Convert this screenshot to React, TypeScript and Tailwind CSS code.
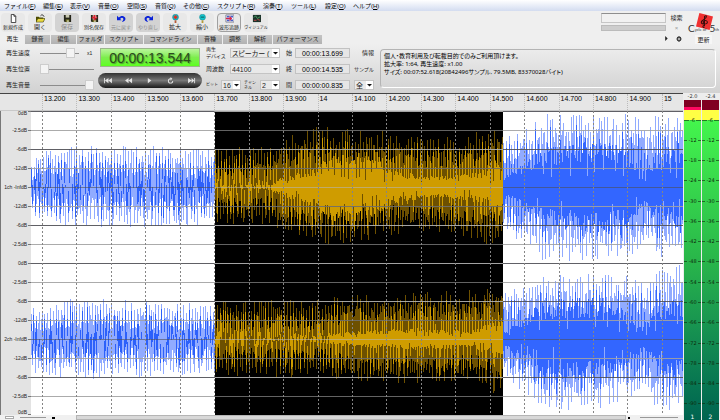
import type { ReactNode } from "react";
import clsx from "clsx";

const menus = [
  ["ファイル", "F", "w-[39px]"],
  ["編集", "E", "w-[27px]"],
  ["表示", "V", "w-[28px]"],
  ["音量", "O", "w-[29px]"],
  ["空間", "S", "w-[28px]"],
  ["音質", "Q", "w-[28px]"],
  ["その他", "C", "w-[34px]"],
  ["スクリプト", "R", "w-[46px]"],
  ["演奏", "T", "w-[28px]"],
  ["ツール", "L", "w-[34px]"],
  ["設定", "O", "w-[28px]"],
  ["ヘルプ", "H", "w-[34px]"],
];

const tabs = [
  ["再生", "w-[24px]"],
  ["録音", "w-[26px]"],
  ["編集", "w-[26px]"],
  ["フォルダ", "w-[28px]"],
  ["スクリプト", "w-[39px]"],
  ["コマンドライン", "w-[54px]"],
  ["音種", "w-[25px]"],
  ["調整", "w-[25px]"],
  ["解析", "w-[25px]"],
  ["パフォーマンス", "w-[50px]"],
];

const times = [
  "13.200", "13.300", "13.400", "13.500", "13.600", "13.700", "13.800",
  "13.900", "14", "14.100", "14.200", "14.300", "14.400", "14.500",
  "14.600", "14.700", "14.800", "14.900", "15",
];

const levels = [
  "0dB", "-2.5dB", "-6dB", "-12dB", "1ch -InfdB", "-12dB", "-6dB", "-2.5dB",
  "0dB", "-2.5dB", "-6dB", "-12dB", "2ch -InfdB", "-12dB", "-6dB", "-2.5dB",
  "0dB",
];

const meterMarks = [
  -6, -12, -18, -24, -30, -36, -42, -48, -54, -60, -66, -72, -78, -84, -90,
];

function Floppy() {
  return (
    <>
      <path d="M1 1h8v8H2L1 8z" fill="#26261a" />
      <path d="M3 1h4v3H3z" fill="#c9c9b0" />
      <path d="M3 6h4v3H3z" fill="#77772a" />
      <path d="M5 7h1v2H5z" fill="#fff" />
    </>
  );
}

const icons: Record<string, ReactNode> = {
  新規作成: <path d="M2.500 .5h3l2 2v7h-5zM5.500 .5v2h2" fill="#fff" stroke="#333" />,
  開く: (
    <>
      <path d="M0 3h3l1 1h4v5H0z" fill="#4b4b00" />
      <path d="M2 5h8L8 9H0z" fill="#e8d840" stroke="#333300" strokeWidth=".6" />
      <path d="M5 2c1-1.500 3-1.500 4 1" fill="none" stroke="#222" />
    </>
  ),
  保存: <Floppy />,
  別名保存: (
    <>
      <Floppy />
      <path d="M4 1h2v2h2v2H6v2H4V5H2V3h2z" fill="#dd2233" />
      <path d="M6 3h1v1H6zM3 5h1v1H3z" fill="#fff" />
    </>
  ),
  元に戻す: (
    <path d="M0 2v5h5L3.500 5.500C5 3.500 7.500 4 7 6.500L5.500 9C9 8.500 10 6 9 4 7.500 1.500 4 1.500 2 4z" fill="#0a22d8" />
  ),
  やり直し: (
    <path d="M10 2v5H5l1.500-1.500C5 3.500 2.500 4 3 6.500L4.500 9C1 8.500 0 6 1 4 2.500 1.500 6 1.500 8 4z" fill="#0a22d8" />
  ),
  拡大: (
    <>
      <circle cx="5" cy="3.500" r="3.300" fill="#16b7c4" stroke="#14808c" strokeWidth=".5" />
      <path d="M3 3.500h4M5 1.500v4" stroke="#e03020" strokeWidth="1.800" />
      <path d="M4 7h2v3H4z" fill="#b55a38" />
    </>
  ),
  縮小: (
    <>
      <circle cx="5" cy="3.500" r="3.300" fill="#16c4cc" stroke="#14808c" strokeWidth=".5" />
      <path d="M3 3.500h4" stroke="#177" strokeWidth="1.500" />
      <path d="M4 7h2v3H4z" fill="#b59a38" />
    </>
  ),
  波形追跡: (
    <>
      <path d="M1 1h9v8H1z" fill="#fff" stroke="#556" strokeWidth=".7" />
      <path d="M2 2h3v2H2zM6 2h3v2H6zM2 6h3v2H2zM6 6h3v2H6z" fill="#4661c8" />
      <path d="M1 5h6" stroke="#d3254d" strokeWidth="1.500" />
      <path d="M5 2l3 3-3 3z" fill="#d3254d" />
    </>
  ),
  ヴィジュアル: (
    <>
      <path d="M1 1h9v8H1z" fill="#1d332c" />
      <path d="M2 4l2-2 2 3 3-2" fill="none" stroke="#4da866" />
      <path d="M2 7h3M6 6l3 1" stroke="#c84848" />
    </>
  ),
};

const tools = Object.keys(icons);

// [x, peak above, peak below, solid core]
type Shape = [number, number, number, number];

const channels: { mid: number; seed: number; shape: Shape[] }[] = [
  {
    mid: 76,
    seed: 11,
    shape: [
      [0, 24, 30, 0], [10, 38, 36, 0], [60, 42, 41, 0], [184, 40, 39, 0],
      [186, 38, 38, 0], [235, 42, 40, 2], [255, 52, 46, 8], [284, 60, 56, 15],
      [305, 60, 58, 25], [335, 58, 53, 23], [365, 54, 47, 12],
      [400, 50, 45, 8], [430, 51, 49, 9], [455, 58, 58, 14],
      [471, 62, 62, 22], [473, 52, 44, 8], [490, 60, 60, 16],
      [515, 74, 76, 29], [570, 76, 76, 34], [595, 74, 70, 28],
      [615, 68, 62, 17], [630, 74, 70, 24], [652, 76, 76, 34],
    ],
  },
  {
    mid: 228,
    seed: 47,
    shape: [
      [0, 32, 36, 0], [45, 41, 41, 0], [100, 40, 39, 0], [184, 35, 35, 0],
      [186, 39, 36, 0], [235, 39, 38, 1], [285, 41, 40, 3],
      [325, 44, 42, 6], [380, 46, 46, 8], [440, 50, 40, 6],
      [460, 56, 54, 12], [471, 58, 58, 16], [473, 48, 38, 6],
      [490, 54, 52, 16], [515, 64, 70, 28], [560, 66, 72, 30],
      [595, 64, 60, 20], [612, 56, 50, 10], [622, 70, 66, 20],
      [640, 74, 76, 28], [652, 76, 62, 26],
    ],
  },
];

function shapeAt(shape: Shape[], x: number) {
  const i = Math.max(1, shape.findIndex((s) => s[0] >= x));
  const a = shape[i - 1];
  const b = shape[i];
  const t = (x - a[0]) / (b[0] - a[0]);
  return [1, 2, 3].map((k) => a[k] + (b[k] - a[k]) * t);
}

function trace(channel: (typeof channels)[0], from: number, to: number) {
  const { mid, shape } = channel;
  let s = channel.seed * 7919 + from * 104729 + 1;
  const rnd = () => {
    s = (s * 16807) % 2147483647;
    return s / 2147483647;
  };
  let soft = "";
  let solid = "";
  const bar = (x: number, up: number, down: number) => {
    const height = Math.max(1, Math.round(up + down));
    return `M${x} ${Math.round(mid - up)}v${height}h1v${-height}z`;
  };
  let crest = 0;
  let trough = 1;
  for (let x = from; x < to; x++) {
    const [up, down, core] = shapeAt(shape, x);
    const loud = core > 5 ? 0.15 : 0;
    let a = 0.22 + loud + rnd() * 0.4;
    let b = 0.22 + loud + rnd() * 0.4;
    let solidUp = core * (0.7 + rnd() * 0.7);
    let solidDown = core * (0.7 + rnd() * 0.7);
    if (--crest <= 0) {
      crest = rnd() < 0.7 ? 3 : 2;
      a = 0.68 + rnd() * 0.32;
      if (rnd() < 0.8) solidUp = Math.max(solidUp, up * a * (0.45 + rnd() * 0.45));
      if (core < 4) solidDown = (rnd() - 0.5) * 18;
    } else if (--trough <= 0) {
      trough = rnd() < 0.7 ? 2 : 1;
      b = 0.68 + rnd() * 0.32;
      if (rnd() < 0.8) solidDown = Math.max(solidDown, down * b * (0.45 + rnd() * 0.45));
      if (core < 4) solidUp = (rnd() - 0.5) * 18;
    } else if (core < 4 && rnd() < 0.4) {
      solidUp = rnd() * 16;
      solidDown = rnd() * 16;
    } else if (rnd() < 0.2) {
      solidUp *= 0.4;
    } else if (rnd() < 0.2) {
      solidDown *= 0.4;
    }
    soft += bar(x, Math.max(solidUp, up * a), Math.max(solidDown, down * b));
    if (solidUp + solidDown > 1) solid += bar(x, solidUp, solidDown);
  }
  return { soft, solid };
}

const regions = [
  { from: 0, to: 184, soft: "#91abff", solid: "#2c60fa" },
  { from: 184, to: 472, soft: "#6d5000", solid: "#cf9c00" },
  { from: 472, to: 652, soft: "#91abff", solid: "#3366ff" },
];

function Waveform() {
  return (
    <svg
      viewBox="0 0 652 304"
      preserveAspectRatio="none"
      shapeRendering="crispEdges"
      className="block h-full w-full"
    >
      <path d="M0 0h652v304H0z" fill="#fff" />
      <path d="M184 0h288v304H184z" fill="#000" />
      {regions.map((region) =>
        channels.map((channel) => {
          const t = trace(channel, region.from, region.to);
          return (
            <g key={`${region.from}-${channel.mid}`}>
              <path d={t.soft} fill={region.soft} />
              <path d={t.solid} fill={region.solid} />
            </g>
          );
        })
      )}
      {Array.from({ length: 16 }, (_, i) => {
        const major = i % 2 === 0;
        return (
          <g key={i} opacity={i % 4 === 0 && i % 8 !== 0 ? 0.6 : 0.9}>
            <path d={`M0 ${i * 19}h184v1H0zM472 ${i * 19}h180v1H472z`} fill={major ? "#4f4f55" : "#a2a2a2"} />
            <path d={`M184 ${i * 19}h288v1H184z`} fill={major ? "#b5b5b5" : "#6e6e6e"} />
          </g>
        );
      })}
      {times.map((time, i) => (
        <path
          key={time}
          d={`M${Math.round(11 + i * 34.44) + 0.5} 0v304`}
          stroke="#858585"
          strokeDasharray="2 2"
        />
      ))}
    </svg>
  );
}

function Slider({ label, value, width }: { label: string; value: number; width: string }) {
  return (
    <div className="flex h-4 items-center">
      <label htmlFor={label} className="w-[34px] shrink-0">
        {label}
      </label>
      <input
        id={label}
        type="range"
        defaultValue={value}
        className={clsx(
          "h-[10px] appearance-none bg-transparent [&::-webkit-slider-runnable-track]:h-px [&::-webkit-slider-runnable-track]:bg-[#8c8c8c] [&::-webkit-slider-thumb]:-mt-[5px] [&::-webkit-slider-thumb]:h-[10px] [&::-webkit-slider-thumb]:w-[9px] [&::-webkit-slider-thumb]:appearance-none [&::-webkit-slider-thumb]:border [&::-webkit-slider-thumb]:border-[#cdcdcd] [&::-webkit-slider-thumb]:bg-[#f4f4f4]",
          width
        )}
      />
      {label === "再生速度" && <span className="pl-2 text-[5px]">x1</span>}
    </div>
  );
}

function Select({ label, value, width }: { label: string; value: string; width: string }) {
  return (
    <span className={clsx("relative flex h-[10px] items-center", width)}>
      <select
        aria-label={label}
        className="h-full w-full appearance-none border border-[#c4c4c4] bg-[#e9e9e9] pl-[1px] text-[7px] leading-none [font-feature-settings:'palt']"
      >
        <option>{value}</option>
      </select>
      <svg viewBox="0 0 7 8" className="pointer-events-none absolute right-px h-2 w-[7px]">
        <path d="M0 0h7v8H0z" fill="#fff" />
        <path d="M1 3h5L3.500 5.500z" fill="#111" />
      </svg>
    </span>
  );
}

function TimeField({ label, value }: { label: string; value: string }) {
  return (
    <div className="flex h-4 items-center">
      <label htmlFor={label} className="w-[9px]">
        {label}
      </label>
      <input
        id={label}
        defaultValue={value}
        className="h-[10px] w-[55px] border border-[#c2c2c2] bg-[#e6e6e6] text-center font-['Liberation_Sans'] text-[7px] leading-none text-black"
      />
    </div>
  );
}

const transport = [
  ["先頭へ", "M0 1h1v6H0zM5 1v6L1 4zM9 1v6L5 4z"],
  ["巻き戻し", "M4 1v6L0 4zM8 1v6L4 4z"],
  ["再生", "M2 1v6l4-3z"],
  ["ループ", "M4 0v1.500a3 3 0 1 0 3 3h-1a2 2 0 1 1-2-2V4l2-2z"],
  ["早送り", "M0 1v6l4-3zM4 1v6l3-3zM7 1h1v6H7z"],
];

function Meter({ channel, peak, clipped }: { channel: number; peak: string; clipped?: boolean }) {
  return (
    <div className="flex w-[17px] flex-col font-['DejaVu_Sans'] text-[5px]">
      <div className="h-[7px] text-center leading-[7px] text-[#333]">{peak}</div>
      <div className="flex flex-1 flex-col bg-linear-to-b from-[#48ff4c] via-[#29b64a] to-[#006450]">
        <div className={clsx("h-[10px] bg-[#800022]", clipped && "border-b-[3px] border-[#ff0860]")} />
        <div className="flex flex-1 flex-col bg-[linear-gradient(#ffff45_10px,transparent_10px)]">
          {meterMarks.map((mark) => (
            <div key={mark} className="flex flex-1 items-center gap-px text-[#0d2a0a]">
              <span className="h-px flex-1 bg-current opacity-60" />
              <span className="leading-none">{mark}</span>
              <span className="h-px flex-1 bg-current opacity-60" />
            </div>
          ))}
        </div>
        <div className="h-[6px] text-center text-[6px] leading-[6px] text-white">{channel}</div>
      </div>
    </div>
  );
}

function Logo() {
  return (
    <div className="relative flex h-[20px] w-[31px] items-end font-['Lato'] leading-none text-[#333]">
      <svg viewBox="0 0 20 20" className="absolute left-[8px] top-0 h-[17px] w-[17px]">
        <path d="M4 0l16 4-4 16L0 16z" fill="#f03030" />
        <path
          d="M10 17c-3 0-2-3 0-2V4c3-2 3 1 0 3-5 3-5 6 0 6 5 0 4-5 0-4-2 1-2 3 0 3"
          fill="none"
          stroke="#3a0d0d"
          strokeWidth="1.200"
        />
      </svg>
      <span className="relative text-[10px]">C</span>
      <span className="relative flex-1 pb-px text-[4px]">ycle of</span>
      <span className="relative text-[10px]">5</span>
      <span className="relative pb-px text-[4px]">th</span>
    </div>
  );
}

export default function App() {
  return (
    <div className="flex min-h-screen flex-col overflow-hidden bg-[#efefef] font-['Liberation_Sans','Noto_Sans_CJK_JP',sans-serif] text-[6px] leading-none text-[#222]">
      <nav className="flex h-[11px] items-center bg-linear-to-b from-white to-[#d3dcf0] pl-1 text-black">
        {menus.map(([name, key, width]) => (
          <button key={name} className={clsx("shrink-0 whitespace-nowrap text-left", width)}>
            {name}(<u>{key}</u>)
          </button>
        ))}
      </nav>

      <header className="flex h-[33px] justify-between">
        <div className="flex flex-col justify-between pl-px pt-[2px]">
          <div className="flex gap-[3px]">
            {tools.map((tool) => {
              const disabled = ["保存", "元に戻す", "やり直し"].includes(tool);
              return (
                <button
                  key={tool}
                  className={clsx(
                    "flex h-[19px] w-6 flex-col items-center justify-between rounded-sm border whitespace-nowrap",
                    tool.length > 4 && "text-[4px]",
                    tool.length === 4 && "text-[5px]",
                    disabled ? "bg-[#d3d3d3] text-[#8d8d8d]" : "bg-[#e8e8e8]",
                    tool === "波形追跡" ? "border-[#a0a0a0]" : "border-transparent"
                  )}
                >
                  <svg viewBox="0 0 10 10" className="h-[9px] w-[9px] shrink-0">
                    {icons[tool]}
                  </svg>
                  <span className="leading-[7px]">{tool}</span>
                </button>
              );
            })}
          </div>
          <div role="tablist" className="flex items-end">
            {tabs.map(([tab, width], i) => (
              <button
                key={tab}
                role="tab"
                aria-selected={i === 0}
                className={clsx(
                  "h-[9px] shrink-0 whitespace-nowrap border-r border-[#eee] leading-[9px]",
                  i === 0 ? "bg-[#efefef]" : "bg-linear-to-b from-[#c4c4c4] to-[#b2b2b2]",
                  width
                )}
              >
                {tab}
              </button>
            ))}
          </div>
        </div>

        <div className="flex gap-[5px] pr-px pt-[2px]">
          <div className="flex flex-col gap-[2px]">
            <div className="flex items-center gap-1">
              <input
                aria-label="検索語"
                className="h-[10px] w-[65px] border border-[#c6c6c6] border-t-[#8e8e8e] bg-[#f1f1f1]"
              />
              <button className="w-[13px] whitespace-nowrap">検索</button>
            </div>
            <div className="flex items-center gap-1">
              <div className="h-[6px] w-[65px] border border-[#bbb] bg-[#cdcdcd]" />
              <button className="w-[13px] text-[#999]">×</button>
            </div>
            <div className="flex flex-1 items-center justify-end gap-2 pr-px">
              <button aria-label="次へ">
                <svg viewBox="0 0 4 6" className="h-[5px] w-[4px]">
                  <path d="M1 0l3 3-3 3z" fill="#222" />
                </svg>
              </button>
              <button aria-label="設定">
                <svg viewBox="0 0 8 8" className="h-[6px] w-[6px]">
                  <circle cx="4" cy="4" r="2.500" fill="none" stroke="#333" strokeWidth="1.500" />
                  <path d="M4 0v2M4 6v2M1 4h6" stroke="#333" />
                </svg>
              </button>
            </div>
          </div>
          <div className="flex flex-col items-center gap-[2px]">
            <Logo />
            <button className="h-[9px] bg-[#f6f6f6] px-[2px]">更新</button>
          </div>
        </div>
      </header>

      <section className="flex h-[49px] items-start bg-linear-to-b from-[#efefef] to-[#d2d2d2] pt-px pr-1">
        <div className="w-[100px] shrink-0 pl-[6px]">
          <Slider label="再生速度" value={87} width="w-[39px]" />
          <Slider label="再生位置" value={0} width="w-[54px]" />
          <Slider label="再生音量" value={100} width="w-[54px]" />
        </div>

        <div className="flex w-[106px] shrink-0 flex-col gap-[6px] pt-[3px]">
          <output className="h-[19px] w-[100px] border border-[#9bb58c] bg-linear-to-b from-[#b9f59a] via-[#7dee4c] to-[#5cff1c] text-center font-['Liberation_Sans'] text-[14px] leading-[18px] text-[#2c4a20] [text-shadow:1px_1px_1px_#4b9a2a]">
            00:00:13.544
          </output>
          <div className="-mx-[2px] flex h-[15px] w-[104px] items-center justify-around rounded-full bg-linear-to-b from-[#333] via-[#777] to-[#1b1b1b]">
            {transport.map(([name, d]) => (
              <button key={name} aria-label={name}>
                <svg viewBox="0 0 9 8" className="h-[7px] w-2">
                  <path d={d} fill="#e4e4e4" />
                </svg>
              </button>
            ))}
          </div>
        </div>

        <div className="w-[80px] shrink-0">
          <div className="flex h-4 items-center">
            <span className="w-6 whitespace-nowrap text-[5px] leading-[7px]">
              再生
              <br />
              デバイス
            </span>
            <Select label="再生デバイス" value="スピーカー (" width="w-[50px]" />
          </div>
          <div className="flex h-4 items-center">
            <span className="w-6">周波数</span>
            <Select label="周波数" value="44100" width="w-[50px]" />
          </div>
          <div className="flex h-4 items-center">
            <span className="w-[15px] text-[4px]">ビット</span>
            <Select label="ビット" value="16" width="w-[20px]" />
            <span className="w-[19px] pl-[3px] text-[4px] leading-[5px]">
              チャン
              <br />
              ネル
            </span>
            <Select label="チャンネル" value="2" width="w-[20px]" />
          </div>
        </div>

        <div className="w-[68px] shrink-0">
          <TimeField label="始" value="00:00:13.699" />
          <TimeField label="終" value="00:00:14.535" />
          <TimeField label="間" value="00:00:00.835" />
        </div>

        <div className="w-[26px] shrink-0">
          <div className="flex h-4 items-center pl-2">情報</div>
          <button className="flex h-4 items-center whitespace-nowrap text-[5px]">サンプル</button>
          <div className="flex h-4 items-center">
            <Select label="範囲" value="全" width="w-[20px]" />
          </div>
        </div>

        <div className="mt-1 h-[39px] min-w-0 flex-1 rounded-sm border border-[#b4b4b4] border-b-white border-r-white px-[3px] py-[2px] font-['Noto_Sans','Noto_Sans_CJK_JP',sans-serif] leading-[8px] text-black [font-feature-settings:'palt']">
          <p>個人・教育利用及び転載目的でのみご利用頂けます。</p>
          <p>拡大率: 1:64, 再生速度: x1.00</p>
          <p>サイズ: 00:07:52.618(20842496サンプル, 79.5MB, 83370028バイト)</p>
        </div>
      </section>

      <main className="flex flex-1">
        <div className="flex min-w-0 flex-1 flex-col border-t border-[#444] bg-[#e3e3e3]">
          <div className="flex h-[17px] border-b border-[#c8c8c8] bg-[#e6e6e6] pl-[42px] text-[7px] leading-[9px] text-black">
            {times.map((time, i) => (
              <span
                key={time}
                className={clsx(
                  "border-l border-dotted border-[#bbb] pl-px",
                  i < times.length - 1 ? "w-0 flex-1" : "w-[21px] shrink-0"
                )}
              >
                {time}
              </span>
            ))}
          </div>
          <div className="flex flex-1">
            <div className="flex w-[31px] flex-col border-l border-[#777] text-[5px]">
              {levels.map((level, i) => {
                const first = i === 0;
                const last = i === levels.length - 1;
                return (
                  <div
                    key={i}
                    className={clsx(
                      "flex h-0 justify-end gap-px whitespace-nowrap",
                      first && "flex-[1] items-start",
                      last && "flex-[1] items-end",
                      !first && !last && "flex-[2] items-center"
                    )}
                  >
                    {level}
                    <span className="h-px w-[3px] bg-[#777]" />
                  </div>
                );
              })}
            </div>
            <div className="h-[304px] min-w-0 flex-1">
              <Waveform />
            </div>
          </div>
          <div className="flex h-[5px] items-center bg-[#f0f0f0]">
            <div className="flex w-[76px] items-center gap-[6px] pl-[5px]">
              <span className="h-[3px] w-[9px] border border-[#aaa] bg-white" />
              <span className="h-px w-[26px] bg-[#999]" />
              <span className="h-[2px] w-[3px] bg-black" />
            </div>
            <div className="h-full flex-1 border border-[#b5b5b5] bg-[#d8d8d8]" />
            <div className="flex w-[57px] items-center gap-[10px] pl-[2px]">
              <span className="h-[2px] w-[2px] bg-black" />
              <span className="h-px w-[38px] bg-[#999]" />
            </div>
          </div>
        </div>
        <div className="flex gap-px bg-[#ededed] px-px">
          <Meter channel={1} peak="-2.0" clipped />
          <Meter channel={2} peak="-2.4" />
        </div>
      </main>
    </div>
  );
}
